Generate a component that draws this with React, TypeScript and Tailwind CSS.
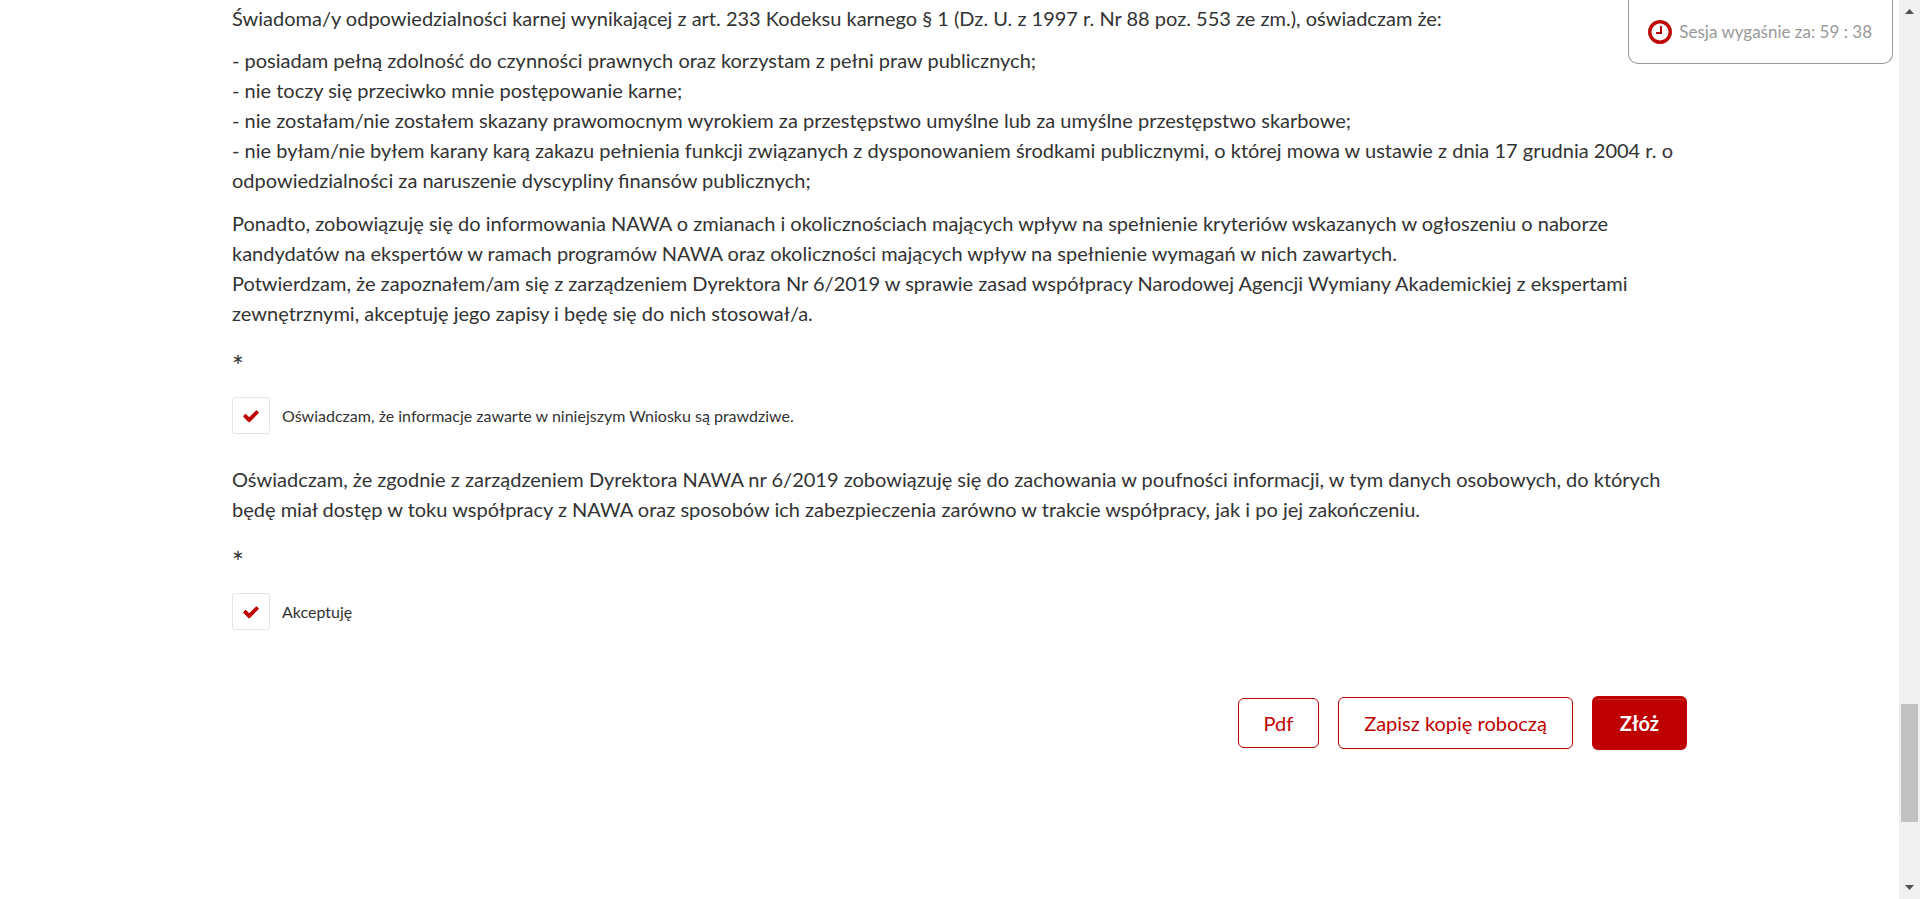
import { useState } from "react";

function ClockIcon() {
  return (
    <svg viewBox="0 0 1792 1792" className="size-7 shrink-0 fill-[#be0000]" aria-hidden="true">
      <path d="M1024 544v448q0 14-9 23t-23 9h-320q-14 0-23-9t-9-23v-64q0-14 9-23t23-9h224v-352q0-14 9-23t23-9h64q14 0 23 9t9 23zm416 352q0-148-73-273t-198-198-273-73-273 73-198 198-73 273 73 273 198 198 273 73 273-73 198-198 73-273zm224 0q0 209-103 385.5t-279.5 279.5-385.5 103-385.5-103-279.5-279.5-103-385.5 103-385.5 279.5-279.5 385.5-103 385.5 103 279.5 279.5 103 385.5z" />
    </svg>
  );
}

function RequiredMark() {
  return <p className="mt-[23px] text-[28px]/[30px]">*</p>;
}

function CheckField({ id, label }: { id: string; label: string }) {
  const [checked, setChecked] = useState(true);
  return (
    <div className="mt-4 flex items-center gap-3">
      <span className="grid h-[37px] w-[38px] shrink-0 place-items-center">
        <input
          id={id}
          type="checkbox"
          checked={checked}
          onChange={(e) => setChecked(e.target.checked)}
          className="col-start-1 row-start-1 h-full w-full appearance-none rounded-[3px] border border-[#e5e5e5] bg-white"
        />
        {checked && (
          <svg
            viewBox="0 0 1792 1792"
            className="pointer-events-none col-start-1 row-start-1 size-[18px] fill-[#be0000]"
            aria-hidden="true"
          >
            <path d="M1671 566q0 40-28 68l-724 724-136 136q-28 28-68 28t-68-28l-136-136-362-362q-28-28-28-68t28-68l136-136q28-28 68-28t68 28l294 295 656-657q28-28 68-28t68 28l136 136q28 28 28 68z" />
          </svg>
        )}
      </span>
      <label htmlFor={id} className="text-base">
        {label}
      </label>
    </div>
  );
}

function ScrollRail() {
  return (
    <div className="flex w-[21px] shrink-0 flex-col items-center bg-[#f0f0f0]" aria-hidden="true">
      <svg viewBox="0 0 9 5" className="mt-[9px] h-[5px] w-[9px] fill-[#505050]">
        <path d="M0 5 4.500 0 9 5z" />
      </svg>
      <div className="grow-[690]" />
      <div className="h-[118px] w-[17px] bg-[#c1c1c1]" />
      <div className="grow-[63]" />
      <svg viewBox="0 0 9 5" className="mb-[9px] h-[5px] w-[9px] fill-[#505050]">
        <path d="M0 0h9L4.500 5z" />
      </svg>
    </div>
  );
}

export default function App() {
  return (
    <div className="flex min-h-screen bg-white font-['Lato',sans-serif] text-xl/[30px] text-[#333]">
      <div className="relative min-w-0 flex-1 pt-[3px] pr-[212px] pl-[232px]">
        <div className="absolute top-0 right-[6px] flex h-16 items-center gap-[5px] rounded-b-[10px] border border-t-0 border-[#999] pr-5 pl-[17px] text-[17px] text-[#999]">
          <ClockIcon />
          <span>Sesja wygaśnie za: 59 : 38</span>
        </div>

        <main>
          <p>
            Świadoma/y odpowiedzialności karnej wynikającej z art. 233 Kodeksu karnego § 1 (Dz. U. z
            1997 r. Nr 88 poz. 553 ze zm.), oświadczam że:
          </p>
          <p className="mt-3">
            - posiadam pełną zdolność do czynności prawnych oraz korzystam z pełni praw publicznych;
            <br />
            - nie toczy się przeciwko mnie postępowanie karne;
            <br />
            - nie zostałam/nie zostałem skazany prawomocnym wyrokiem za przestępstwo umyślne lub za
            umyślne przestępstwo skarbowe;
            <br />
            - nie byłam/nie byłem karany karą zakazu pełnienia funkcji związanych z dysponowaniem
            środkami publicznymi, o której mowa w ustawie z dnia 17 grudnia 2004 r. o
            odpowiedzialności za naruszenie dyscypliny finansów publicznych;
          </p>
          <p className="mt-[13px]">
            Ponadto, zobowiązuję się do informowania NAWA o zmianach i okolicznościach mających wpływ
            na spełnienie kryteriów wskazanych w ogłoszeniu o naborze kandydatów na ekspertów w ramach
            programów NAWA oraz okoliczności mających wpływ na spełnienie wymagań w nich zawartych.
            <br />
            Potwierdzam, że zapoznałem/am się z zarządzeniem Dyrektora Nr 6/2019 w sprawie zasad
            współpracy Narodowej Agencji Wymiany Akademickiej z ekspertami zewnętrznymi, akceptuję
            jego zapisy i będę się do nich stosował/a.
          </p>
          <RequiredMark />
          <CheckField
            id="truth"
            label="Oświadczam, że informacje zawarte w niniejszym Wniosku są prawdziwe."
          />

          <p className="mt-[30px]">
            Oświadczam, że zgodnie z zarządzeniem Dyrektora NAWA nr 6/2019 zobowiązuję się do zachowania
            w poufności informacji, w tym danych osobowych, do których będę miał dostęp w toku współpracy
            z NAWA oraz sposobów ich zabezpieczenia zarówno w trakcie współpracy, jak i po jej
            zakończeniu.
          </p>
          <RequiredMark />
          <CheckField id="confidentiality" label="Akceptuję" />

          <div className="mt-[66px] flex items-center justify-end gap-[19px]">
            <button
              type="button"
              className="h-[50px] rounded-md border border-[#be0000] bg-white px-[25px] text-[#be0000] shadow-xs"
            >
              Pdf
            </button>
            <button
              type="button"
              className="h-[52px] rounded-md border border-[#be0000] bg-white px-[25px] text-[#be0000] shadow-xs"
            >
              Zapisz kopię roboczą
            </button>
            <button
              type="submit"
              className="h-[54px] rounded-md border-3 border-[#be0000] bg-[#be0000] px-[25px] font-bold text-white shadow-xs inset-shadow-[0_1px_0_rgba(255,255,255,0.2)]"
            >
              Złóż
            </button>
          </div>
        </main>
      </div>
      <ScrollRail />
    </div>
  );
}
